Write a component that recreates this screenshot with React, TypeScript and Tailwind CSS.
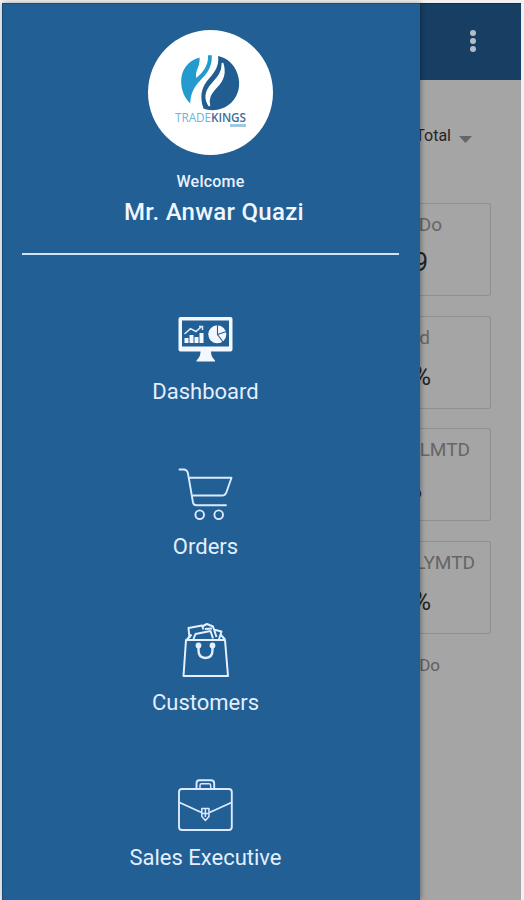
import type { ReactNode } from 'react';

function Logo() {
  return (
    <div className="mr-[2px] flex h-[125px] w-[125px] shrink-0 flex-col items-center rounded-full bg-white pt-[24px]">
      <svg width="60" height="58" viewBox="181 54 60 58" fill="none">
        <path d="M199.500 57.500C187 61 180.500 71 181.200 83C181.700 91 184.500 98 190.300 103.500C190.500 95 193 89 198 83C205 75.500 212.500 69 211.800 55.300H208C208.500 65 204 71 196.500 78C195.300 75 196.500 71 198 67.500C199.300 64 199.800 61 199.500 57.500Z" fill="#249bcf" />
        <path d="M218 56C219.500 65 215 72 209.500 78C201 87 199.500 97 203.500 108.500C212 112 224 110 231.500 102.500C239 95 241 84 237.500 74C234.500 64.500 227.500 58 218 56Z" fill="#215d91" />
        <path d="M222.500 63C226 73 223.500 80 216.500 87C210 94 207.500 99 209.500 106C204.500 99 205.500 91 212.500 83.500C219 76.500 222.500 72 222.500 63Z" fill="white" stroke="white" strokeWidth="1.600" />
      </svg>
      <div className="-mt-[2px] flex w-[72px] justify-center font-['Open_Sans',sans-serif] text-[11.800px] leading-[15px] tracking-[-0.100px]">
        <span className="text-[#69b6d9]">TRADE</span><span className="font-semibold text-[#3e6f9b]">KINGS</span>
      </div>
      <div className="-mt-[1px] ml-[54px] h-[3px] w-[16px] bg-[#9ccbe0]" />
    </div>
  );
}

function DashboardIcon() {
  return (
    <svg width="56" height="56" viewBox="177 311 56 56" fill="none">
      <path fillRule="evenodd" d="M180.500 317H230.500Q232.500 317 232.500 319V349.500Q232.500 351.500 230.500 351.500H211C211 355 212 357.500 215 360.500V361.500H196.500V360.500C199.500 357.500 200.500 355 200.500 351.500H180.500Q178.500 351.500 178.500 349.500V319Q178.500 317 180.500 317ZM182 320.500V346.500H229V320.500Z" fill="#f3f7ff" />
      <path d="M184.500 338h4v5h-4ZM189.500 335h4v8h-4ZM194.500 337h4v6h-4ZM199.500 333h4v10h-4Z" fill="#f3f7ff" />
      <path d="M184.500 334L190.500 328.700L196 331.500L201 327M199 326.500H202.500V330" stroke="#e2ecff" strokeWidth="1.500" />
      <circle cx="217.300" cy="334.300" r="9" fill="#f3f7ff" />
      <path d="M217.500 325V334.500L226.500 331.500M217.500 334.500L223 342" stroke="#215f94" strokeWidth="1.100" />
    </svg>
  );
}

function CartIcon() {
  return (
    <svg width="56" height="56" viewBox="177 466 56 56" fill="none" stroke="#dceaff" strokeWidth="1.900" strokeLinecap="round" strokeLinejoin="round">
      <path d="M179.500 469.500H183.500Q187.200 469.500 188 473.500L193 502.500Q193.600 505.300 196.500 505.300H226M190.500 477.800H231.500L226.500 492Q225.500 495.500 222 495.500H193.500" />
      <circle cx="199.700" cy="514.700" r="4.300" />
      <circle cx="218.700" cy="514.700" r="4.300" />
    </svg>
  );
}

function BagIcon() {
  return (
    <svg width="56" height="56" viewBox="177 622 56 56" fill="none" stroke="#e4efff" strokeWidth="2" strokeLinejoin="round">
      <path d="M186 640H225L228 676H183.500Z" />
      <path d="M187 639.500L191.500 634.500M225 639.500L220.500 634.500" />
      <path d="M189.500 638L188.500 628L202 625.500L203.500 629.500M193.500 639L195.500 634L210.500 631L213 638.500M202 626.500L207 624L213 626.500L216.500 637M213.500 629.500L221.500 631.500L219 639M205 629L212 628.500" />
      <path d="M198.500 646V650Q198.500 658 205.500 658Q212.500 658 212.500 650V646" strokeWidth="2.400" />
      <circle cx="198.500" cy="645.500" r="1.900" fill="#e4efff" />
      <circle cx="212.500" cy="645.500" r="1.900" fill="#e4efff" />
    </svg>
  );
}

function BriefcaseIcon() {
  return (
    <svg width="56" height="56" viewBox="177 777 56 56" fill="none" stroke="#dceaff" strokeWidth="1.900" strokeLinejoin="round">
      <rect x="179" y="789" width="52.800" height="41" rx="3" />
      <path d="M196.500 789V783.500Q196.500 780.300 199.500 780.300H211Q214.200 780.300 214.200 783.500V789" />
      <path d="M200 789V785.500Q200 783.800 201.500 783.800H209Q210.700 783.800 210.700 785.500V789" strokeWidth="1.400" />
      <path d="M179.500 802.500L201.500 812.500M209.500 812.500L231.500 802.500" />
      <path d="M201.800 808.500H209V816.500L205.400 820.500L201.800 816.500ZM201.800 813.500H209M205.400 808.500V817" strokeWidth="1.500" />
    </svg>
  );
}

function MenuItem({ icon, label }: { icon: ReactNode; label: string }) {
  return (
    <li className="flex h-[155.400px] flex-col items-center">
      {icon}
      <span className="mt-[11px] text-[22px] leading-[28px] text-[#e3eeff]">{label}</span>
    </li>
  );
}

function Card({ title, value, titlePad, valuePad }: { title: string; value: string; titlePad: string; valuePad: string }) {
  return (
    <div className="mr-[30px] h-[93px] rounded-r-[3px] border border-l-0 border-[#8f8f8f] whitespace-nowrap">
      <div className={`flex justify-end pt-[8px] text-[19px] leading-[26px] text-[#666] ${titlePad}`}>{title}</div>
      <div className={`flex justify-end text-[25px] leading-[30px] text-[#222] ${valuePad}`}>{value}</div>
    </div>
  );
}

export default function App() {
  return (
    <div className="h-[900px] w-[524px] overflow-hidden bg-[#f1f1f1] pt-[3px] pr-[3px] pl-[2px] font-[Roboto,sans-serif]">
      <div className="flex h-full">
        <aside className="z-10 flex w-[418px] shrink-0 flex-col items-center border-t border-l border-[#174c7c] bg-[#215f94] pt-[26px] shadow-[1px_0_5px_rgba(0,0,0,0.35)]">
          <Logo />
          <div className="mt-[17px] mr-[2px] text-[16px] leading-[20px] font-medium tracking-[0.200px] text-[#e8f1ff]">Welcome</div>
          <div className="mt-[6px] ml-[5px] text-[24px] leading-[28px] font-medium tracking-[0.270px] text-[#f0f6ff]">Mr. Anwar Quazi</div>
          <div className="mt-[27px] mr-[2px] h-[2px] w-[377px] shrink-0 bg-[#d2e3f6]" />
          <ul className="mt-[56px] mr-[12px]">
            <MenuItem icon={<DashboardIcon />} label="Dashboard" />
            <MenuItem icon={<CartIcon />} label="Orders" />
            <MenuItem icon={<BagIcon />} label="Customers" />
            <MenuItem icon={<BriefcaseIcon />} label="Sales Executive" />
          </ul>
        </aside>
        <main className="w-[101px] shrink-0 overflow-hidden bg-[#a5a5a5]">
          <header className="flex h-[77px] justify-end border-t border-[#0d2d52] bg-[#173f63] pt-[26px] pr-[45px]">
            <div className="flex flex-col gap-[2px]">
              <i className="h-[6px] w-[6px] rounded-full bg-[#b3bdc5]" />
              <i className="h-[6px] w-[6px] rounded-full bg-[#b3bdc5]" />
              <i className="h-[6px] w-[6px] rounded-full bg-[#b3bdc5]" />
            </div>
          </header>
          <div className="flex h-[123px] items-start justify-end gap-[8px] pt-[46px] pr-[49px] text-[16px] leading-[20px] text-[#252525]">
            <span>Total</span>
            <svg className="mt-[10px] shrink-0" width="13" height="7"><path d="M0 0H13L6.500 7Z" fill="#666" /></svg>
          </div>
          <div className="flex flex-col gap-[19.600px]">
            <Card title="To Do" value="9" titlePad="pr-[48px]" valuePad="pt-[10px] pr-[62px]" />
            <Card title="Achieved" value="0%" titlePad="pr-[60px]" valuePad="pt-[11px] pr-[59px]" />
            <Card title="vs LMTD" value="0%" titlePad="pr-[20px]" valuePad="pt-[12px] pr-[68px]" />
            <Card title="vs LYMTD" value="0%" titlePad="pr-[15px]" valuePad="pt-[11px] pr-[59px]" />
          </div>
          <div className="mt-[20px] flex justify-end pr-[81px] text-[17px] leading-[22px] whitespace-nowrap text-[#606060]">To Do</div>
        </main>
      </div>
    </div>
  );
}
